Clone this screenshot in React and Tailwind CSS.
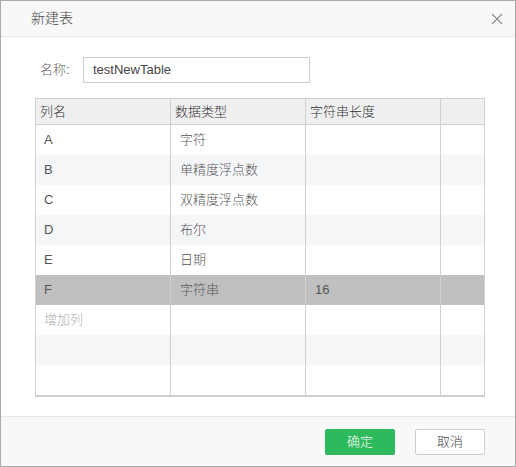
const rows = [
  { name: "A", type: "字符", len: "" },
  { name: "B", type: "单精度浮点数", len: "" },
  { name: "C", type: "双精度浮点数", len: "" },
  { name: "D", type: "布尔", len: "" },
  { name: "E", type: "日期", len: "" },
  { name: "F", type: "字符串", len: "16", selected: true },
  { name: "增加列", type: "", len: "", add: true },
  { name: "", type: "", len: "" },
  { name: "", type: "", len: "" },
];

export default function App() {
  return (
    <div
      className="flex h-[467px] w-[516px] flex-col border border-[#a9a9a9] bg-white text-[13px] font-light text-[#333]"
      style={{ fontFamily: '"Liberation Sans", "Noto Sans CJK SC", sans-serif' }}
    >
      <div className="flex h-[36px] shrink-0 items-center justify-between border-b border-[#e6e6e6] bg-[#f8f8f8] pl-[30px] pr-[12px]">
        <span className="text-[14px] text-[#444]">新建表</span>
        <svg width="12" height="12" viewBox="0 0 12 12" className="text-[#8a8a8a]">
          <path d="M1 1L11 11M11 1L1 11" stroke="currentColor" strokeWidth="1.1" fill="none" />
        </svg>
      </div>

      <div className="flex-1 px-[34px]">
        <div className="mt-[20px] flex items-center">
          <span className="w-[48px] pl-[5px] text-[#666]">名称:</span>
          <div className="flex h-[26px] w-[227px] items-center border border-[#ccc] px-[9px] text-[#444]">
            testNewTable
          </div>
        </div>

        <div className="mt-[15px] w-[450px] border-x border-b-2 border-t border-[#d0d0d0]">
          <div className="flex h-[26px] border-b border-[#d0d0d0] bg-[#efefef] text-[#333]">
            <div className="flex w-[135px] items-center border-r border-[#d0d0d0] pl-[4px]">列名</div>
            <div className="flex w-[135px] items-center border-r border-[#d0d0d0] pl-[4px]">数据类型</div>
            <div className="flex w-[135px] items-center border-r border-[#d0d0d0] pl-[4px]">字符串长度</div>
            <div className="flex-1" />
          </div>
          {rows.map((r, i) => (
            <div
              key={i}
              className={
                "flex h-[30px] " +
                (r.selected ? "bg-[#c0c0c0]" : i % 2 === 1 ? "bg-[#f5f6f8]" : "bg-white")
              }
            >
              <div
                className={
                  "flex w-[135px] items-center border-r border-[#d0d0d0] pl-[8px] " +
                  (r.add ? "text-[#aaa]" : "text-[#555]")
                }
              >
                {r.name}
              </div>
              <div className="flex w-[135px] items-center border-r border-[#d0d0d0] pl-[9px] text-[#555]">
                {r.type}
              </div>
              <div className="flex w-[135px] items-center border-r border-[#d0d0d0] pl-[9px] text-[#555]">
                {r.len}
              </div>
              <div className="flex-1" />
            </div>
          ))}
        </div>
      </div>

      <div className="flex h-[50px] shrink-0 items-center justify-end gap-[20px] border-t border-[#e6e6e6] bg-[#f8f8f8] pr-[30px]">
        <button className="flex h-[26px] w-[70px] items-center justify-center rounded-[2px] bg-[#2db95c] text-white">
          确定
        </button>
        <button className="flex h-[26px] w-[70px] items-center justify-center rounded-[2px] border border-[#ccc] bg-white text-[#444]">
          取消
        </button>
      </div>
    </div>
  );
}
